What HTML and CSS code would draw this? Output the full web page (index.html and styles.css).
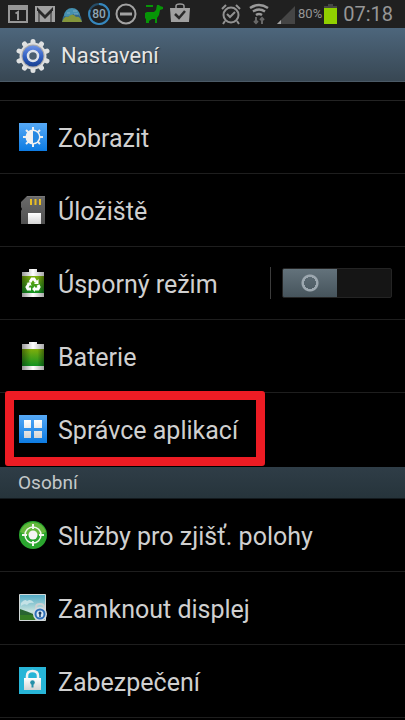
FILE: index.html
```
<!DOCTYPE html>
<html lang="cs">
<head>
<meta charset="utf-8">
<meta name="viewport" content="width=device-width, initial-scale=1">
<title>Nastavení</title>
<link rel="stylesheet" href="styles.css">
</head>
<body>
<svg class="defs" width="0" height="0" aria-hidden="true">
  <defs>
    <linearGradient id="blue" x1="0" y1="0" x2="0" y2="1"><stop offset="0" stop-color="#56a9f6"/><stop offset="1" stop-color="#0d7be2"/></linearGradient>
    <linearGradient id="white" x1="0" y1="0" x2="0" y2="1"><stop offset="0" stop-color="#fff"/><stop offset="1" stop-color="#d4d4d4"/></linearGradient>
    <linearGradient id="metal" x1="0" y1="0" x2="1" y2="0"><stop offset="0" stop-color="#999"/><stop offset=".5" stop-color="#fff"/><stop offset="1" stop-color="#a8a8a8"/></linearGradient>
    <linearGradient id="green" x1="0" y1="0" x2="0" y2="1"><stop offset="0" stop-color="#7fae0c"/><stop offset="1" stop-color="#119222"/></linearGradient>
    <linearGradient id="shade" x1="0" y1="0" x2="1" y2="0"><stop offset="0" stop-color="#000" stop-opacity=".4"/><stop offset=".4" stop-color="#000" stop-opacity="0"/><stop offset=".7" stop-color="#000" stop-opacity="0"/><stop offset="1" stop-color="#000" stop-opacity=".4"/></linearGradient>
    <linearGradient id="card" x1="0" y1="0" x2="0" y2="1"><stop offset="0" stop-color="#6a6a6a"/><stop offset="1" stop-color="#505050"/></linearGradient>
    <linearGradient id="sky" x1="0" y1="0" x2="0" y2="1"><stop offset="0" stop-color="#4fa9c4"/><stop offset=".65" stop-color="#c7e3de"/><stop offset="1" stop-color="#7ba58a"/></linearGradient>
    <linearGradient id="knob" x1="0" y1="0" x2="0" y2="1"><stop offset="0" stop-color="#6e93e6"/><stop offset=".5" stop-color="#3462c4"/><stop offset="1" stop-color="#173f91"/></linearGradient>
  </defs>
</svg>

<div class="status">
  <div class="status-group">
    <svg width="22" height="22" viewBox="0 0 22 22"><path d="M2 3h18v16H2z" fill="none" stroke="#979797" stroke-width="2"/><path d="M1 2h20v5H1z" fill="#979797"/><path d="M8.500 10.500l2.500-1.500v8" fill="none" stroke="#979797" stroke-width="2"/></svg>
    <svg width="22" height="22" viewBox="0 0 22 22"><path d="M1 3h20v16H1z" fill="#a0a0a0"/><path d="M5 7v12M17 7v12" stroke="#292929"/><path d="M3 4l8 8 8-8v4l-8 8-8-8z" fill="#292929"/><path d="M3 8v10M19 8v10" stroke="#a0a0a0" stroke-width="2"/></svg>
    <svg width="22" height="22" viewBox="0 0 22 22"><path d="M1 19a10 12 0 0 1 20 0z" fill="#31658a"/><path d="M3 13a8 8 0 0 1 16 0q-4-4-8-1t-8 1" fill="#4590b0"/><path d="M1 19q2-6 6-5 5-5 8 0 4-1 6 5z" fill="#84963b"/><path d="M6 10h3M12 8h4M13 11h4" stroke="#7fabc1"/></svg>
    <svg width="22" height="22" viewBox="0 0 22 22"><circle cx="11" cy="11" r="10" fill="none" stroke="#264d68" stroke-width="2"/><path d="M11 1a10 10 0 1 1-9 6" fill="none" stroke="#3687bd" stroke-width="2"/><text x="11" y="15" text-anchor="middle" class="badge">80</text></svg>
    <svg width="22" height="22" viewBox="0 0 22 22"><circle cx="11" cy="11" r="9.500" fill="none" stroke="#a3a3a3" stroke-width="2"/><path d="M5 11h12" stroke="#a3a3a3" stroke-width="3"/></svg>
    <svg width="22" height="22" viewBox="0 0 22 22"><path d="M15 2h2l1 1 3 1v2l-3 1-1 5-2 3v5h-2v-4h-3l-3 2v2H4v-4l-1-1v-5l2-1h7l2-2z" fill="#079507"/><path d="M4 3h7" stroke="#079507" stroke-width="2"/></svg>
    <svg width="22" height="22" viewBox="0 0 22 22"><path d="M7 5V3q0-2 4-2t4 2v2" fill="none" stroke="#999" stroke-width="1.500"/><path d="M1 5h20l-1 14H2z" fill="#a0a0a0"/><path d="M6 11l4 4 6-7" fill="none" stroke="#292929" stroke-width="2.500"/></svg>
  </div>
  <div class="status-group status-right">
    <svg width="20" height="22" viewBox="0 0 20 22"><g fill="none" stroke="#929292" stroke-width="2"><circle cx="10" cy="12" r="7.500"/><path d="M6 11l3 3 5-5M4 18l-2 3M16 18l2 3M1 6l4-4M19 6l-4-4"/></g></svg>
    <svg class="wifi" width="20" height="22" viewBox="0 0 20 22"><g fill="none" stroke="#999" stroke-width="2.500"><path d="M1 5q9-6 18 0M4 8.500q6-4 12 0M7 12q3-2 6 0"/></g><path d="M7 14v6M5 18l2 2 2-2M13 21v-6M11 17l2-2 2 2" fill="none" stroke="#686868" stroke-width="2"/></svg>
    <svg width="19" height="22" viewBox="0 0 19 22"><path d="M19 3v18H1z" fill="#454545"/><path d="M5 17v4H1z" fill="#a0a0a0"/></svg>
    <span class="percent">80%</span>
    <svg width="13" height="22" viewBox="0 0 13 22"><path d="M4 1h5v2h4v3H0V3h4z" fill="#454545"/><path d="M0 5h13v16H0z" fill="#91d000"/></svg>
    <time class="clock">07:18</time>
  </div>
</div>

<header class="header">
  <svg width="34" height="36" viewBox="-17 -18 34 36">
    <g stroke="#dfe1e2" stroke-width="5" stroke-linecap="round"><path d="M0-14.500v29M-8.500-12L8.500 12M8.500-12L-8.500 12M-14-5L14 5M14-5L-14 5"/></g>
    <circle r="13.500" fill="#dedede"/><circle r="11.500" fill="#a9a9a9"/><circle r="10.500" fill="url(#knob)"/><circle r="5" fill="#4b5f70" stroke="#dde2ea" stroke-width="2.500"/>
  </svg>
  <h1>Nastavení</h1>
</header>

<main>
  <div class="scrolled"></div>
  <ul class="list">
    <li><a href="#zobrazit"><svg class="icon" viewBox="0 0 28 28"><path d="M0 0h28v28H0z" fill="url(#blue)"/><path d="M14 4v20M4 14h20M7 7l14 14M21 7L7 21" stroke="#eee" stroke-width="2"/><circle cx="14" cy="14" r="7.500" fill="#f1f1f1"/><path d="M14 8a6 6 0 0 1 0 12z" fill="#2588e2"/></svg><span>Zobrazit</span></a></li>
    <li><a href="#uloziste"><svg class="icon" viewBox="0 0 28 28"><path d="M8 0h18v28H2V15l1-2-1-2V6z" fill="url(#card)"/><path d="M8 0h18" stroke="#888"/><path d="M12 3v6M16.500 3v6M21 3v6" stroke="#e8bd24" stroke-width="2"/><path d="M9 17h13v11H9z" fill="url(#white)"/></svg><span>Úložiště</span></a></li>
    <li class="split"><a href="#usporny"><svg class="icon" viewBox="0 0 28 28"><path d="M10 0h8v3h7v25H3V3h7z" fill="url(#metal)"/><path d="M3 7h22v17H3z" fill="url(#green)"/><path d="M3 7h22v17H3z" fill="url(#shade)"/><g fill="none" stroke="#fff" stroke-width="3"><path d="M11 13l2-3h2l2 3M19 16l1 2-1 2h-3M12 20H9l-1-2 2-3"/></g><path d="M19.500 10v5H15zM16 17v6l-3-3zM7.500 14l4-1 1 4z" fill="#fff"/></svg><span id="saving">Úsporný režim</span></a>
      <div class="toggle-cell"><input class="toggle" type="checkbox" role="switch" aria-labelledby="saving"></div></li>
    <li><a href="#baterie"><svg class="icon" viewBox="0 0 28 28"><path d="M10 0h8v2h7v26H3V2h7z" fill="url(#metal)"/><path d="M3 7h22v17H3z" fill="url(#green)"/><path d="M3 7h22v17H3z" fill="url(#shade)"/></svg><span>Baterie</span></a></li>
    <li class="marked"><a href="#aplikace"><svg class="icon" viewBox="0 0 28 28"><path d="M0 0h28v28H0z" fill="url(#blue)"/><path d="M5 5h7v8H5zM15 5h8v8h-8zM5 16h7v7H5zM15 16h8v7h-8z" fill="url(#white)"/></svg><span>Správce aplikací</span></a></li>
  </ul>
  <h2>Osobní</h2>
  <ul class="list">
    <li><a href="#poloha"><svg class="icon" viewBox="0 0 28 28"><circle cx="14" cy="14" r="14" fill="#2aa52e"/><path d="M1 11a13.500 13.500 0 0 1 26 0q-13 7-26 0z" fill="#64b83c"/><circle cx="14" cy="14" r="8" fill="none" stroke="#f1f6ee" stroke-width="1.500"/><path d="M14 3v5M14 20v5M3 14h5M20 14h5" stroke="#f1f6ee" stroke-width="2"/><circle cx="14" cy="14" r="4.500" fill="#f4f4f4"/></svg><span>Služby pro zjišť. polohy</span></a></li>
    <li><a href="#zamknout"><svg class="icon" viewBox="0 0 28 28"><path d="M.5.5h26v26H.5z" fill="url(#sky)" stroke="#d2d8d8"/><path d="M2 9q4-5 6-2 4-3 7 2-5-1-7 2-3-2-6 1z" fill="#c4e2e6"/><path d="M1 15q9 3 13 5v6H1z" fill="#286431"/><path d="M1 21h15v5H1z" fill="#347c23"/><path d="M17 16v-3q0-3 4-3t4 3v3" fill="none" stroke="#ccd0d2" stroke-width="2"/><circle cx="21" cy="20" r="7" fill="#d4dbe0"/><circle cx="21" cy="20" r="4.500" fill="#d8e7f3" stroke="#2e6fb8" stroke-width="2"/><circle cx="21" cy="19" r="1.500" fill="#193d67"/><path d="M21 19v4" stroke="#193d67" stroke-width="1.500"/></svg><span>Zamknout displej</span></a></li>
    <li><a href="#zabezpeceni"><svg class="icon" viewBox="0 0 28 28"><path d="M0 0h27v27H0z" fill="#27b5d7"/><path d="M8 12V9q0-5 5.500-5T19 9v3" fill="none" stroke="#f2f2f2" stroke-width="2.500"/><path d="M5 11h17v12H5z" fill="url(#white)"/><circle cx="13.500" cy="15.500" r="2.300" fill="#258fa9"/><path d="M13.500 16v4.500" stroke="#258fa9" stroke-width="2"/></svg><span>Zabezpečení</span></a></li>
  </ul>
</main>
</body>
</html>
```
FILE: styles.css
```
*, *::before, *::after { box-sizing: border-box; }
body {
  margin: 0;
  min-height: 100vh;
  overflow-x: hidden;
  background: #000;
  color: #d0d0d0;
  font-family: Roboto, "Liberation Sans", sans-serif;
}
.defs { position: absolute; }
h1, h2, ul { margin: 0; padding: 0; font-weight: 400; }
svg { flex: none; display: block; }

.status {
  display: flex;
  align-items: center;
  justify-content: space-between;
  height: 28px;
  padding: 0 12px 0 7px;
  background: #202020;
  color: #969696;
}
.status-group { display: flex; align-items: center; gap: 5px; }
.status-right { gap: 2px; }
.wifi { margin: 0 5px 0 6px; }
.badge { fill: #8fa6b5; font-size: 12px; font-weight: 500; }
.percent { margin-left: 1px; font-size: 13px; line-height: 28px; }
.clock { margin-left: 4px; font-size: 20px; line-height: 28px; }

.header {
  display: flex;
  align-items: center;
  gap: 11px;
  height: 54px;
  padding: 2px 16px 0;
  border-bottom: 1px solid #4b5a66;
  background: linear-gradient(#4d667c, #384753);
}
h1 { color: #e6e6e6; font-size: 22px; line-height: 28px; text-shadow: 1px 1px 1px #27323b; }

.scrolled { height: 19px; border-bottom: 1px solid #232323; }
.list { list-style: none; }
.list li { position: relative; display: flex; height: 73px; border-bottom: 1px solid #1e1e1e; }
.list a {
  display: flex;
  flex: 1;
  align-items: center;
  gap: 11px;
  padding-left: 19px;
  color: inherit;
  font-size: 25px;
  line-height: 32px;
  text-decoration: none;
  white-space: nowrap;
}
.list span { padding-top: 4px; }
.icon { width: 28px; height: 28px; }
.toggle-cell {
  display: flex;
  align-items: center;
  align-self: center;
  height: 32px;
  padding: 0 13px 0 11px;
  border-left: 1px solid #3c3c3c;
}
.toggle {
  appearance: none;
  width: 110px;
  height: 30px;
  margin: 0;
  border: 1px solid #242424;
  border-radius: 2px;
  background:
    radial-gradient(circle at 27px 14px, transparent 6px, #9ca7af 6px, #9ca7af 8px, transparent 9px),
    linear-gradient(#63727b, #46545c) left / 54px 100% no-repeat,
    #151515;
}
.list .marked { height: 74px; padding-bottom: 2px; border-bottom: 0; }
.marked::after {
  content: "";
  position: absolute;
  top: -2px;
  left: 5px;
  width: 260px;
  height: 75px;
  border: 9px solid #ed1c24;
  border-radius: 3px;
  pointer-events: none;
}
h2 {
  height: 32px;
  padding-left: 18px;
  border-bottom: 1px solid #131a1e;
  background: linear-gradient(#2f3d47, #26343b);
  color: #c4c8ca;
  font-size: 19px;
  line-height: 32px;
}
```
